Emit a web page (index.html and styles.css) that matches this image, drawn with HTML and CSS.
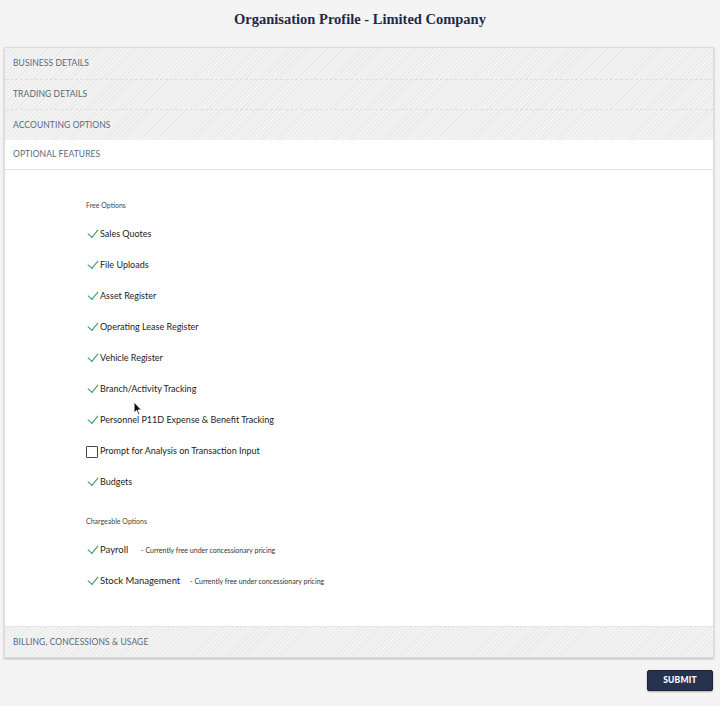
FILE: index.html
```html
<!DOCTYPE html>
<html>
<head>
<meta charset="utf-8">
<link rel="stylesheet" href="styles.css">
</head>
<body>
<h1 class="title">Organisation Profile - Limited Company</h1>
<div class="panel">
  <div class="sec sec-hatch">BUSINESS DETAILS</div>
  <div class="sec sec-hatch dashed">TRADING DETAILS</div>
  <div class="sec sec-hatch dashed">ACCOUNTING OPTIONS</div>
  <div class="sec sec-open">OPTIONAL FEATURES</div>
  <div class="content">
    <div class="group-label">Free Options</div>
    <ul class="opts">
      <li><span class="ico check"></span>Sales Quotes</li>
      <li><span class="ico check"></span>File Uploads</li>
      <li><span class="ico check"></span>Asset Register</li>
      <li><span class="ico check"></span>Operating Lease Register</li>
      <li><span class="ico check"></span>Vehicle Register</li>
      <li><span class="ico check"></span>Branch/Activity Tracking</li>
      <li><span class="ico check"></span>Personnel P11D Expense &amp; Benefit Tracking</li>
      <li><span class="ico box"></span>Prompt for Analysis on Transaction Input</li>
      <li><span class="ico check"></span>Budgets</li>
    </ul>
    <div class="group-label label2">Chargeable Options</div>
    <ul class="opts opts-big">
      <li><span class="ico check"></span><span class="name n1">Payroll</span><span class="note">- Currently free under concessionary pricing</span></li>
      <li><span class="ico check"></span><span class="name n2">Stock Management</span><span class="note">- Currently free under concessionary pricing</span></li>
    </ul>
    <svg class="cursor" width="10" height="15" viewBox="0 0 10 15"><path d="M1 1 L1 12 L3.5 9.5 L5.5 14 L7 13.3 L5 9 L8.5 9 Z" fill="#111" stroke="#fff" stroke-width="1"/></svg>
  </div>
  <div class="sec sec-hatch last">BILLING, CONCESSIONS &amp; USAGE</div>
</div>
<div class="actions"><button class="submit">SUBMIT</button></div>
</body>
</html>
```

FILE: styles.css
```css
* { box-sizing: border-box; }
html, body { margin: 0; padding: 0; }
body {
  background: #f4f4f4;
  font-family: "Lato", "Liberation Sans", sans-serif;
  color: #222;
  width: 720px;
  height: 706px;
  overflow: hidden;
}
.title {
  margin: 0;
  height: 47px;
  padding-top: 11px;
  text-align: center;
  font-family: "Liberation Serif", serif;
  font-weight: bold;
  font-size: 14.5px;
  color: #1e2a4a;
}
.panel {
  margin: 0 6px 0 4px;
  border: 1px solid #dcdcdc;
  background: #fff;
  box-shadow: 0 1px 2px rgba(0,0,0,0.25);
  position: relative;
}
.sec {
  height: 30.5px;
  display: flex;
  align-items: center;
  padding-left: 8px;
  font-size: 8.5px;
  letter-spacing: 0.1px;
  color: #5b687c;
}
.sec-hatch {
  background-color: #f0f0f0;
  background-image: repeating-linear-gradient(-45deg, #e9e9e9 0 1px, #f3f3f3 1px 3px);
}
.dashed { border-top: 1px dashed #dedede; }
.sec-open {
  background: #fff;
  border-bottom: 1px solid #e2e2e2;
}
.last { border-top: 1px solid #e6e6e6; }
.content {
  position: relative;
  padding: 28px 0 30px 81px;
  background: #fff;
}
.group-label {
  height: 14px;
  line-height: 14px;
  font-size: 7px;
  color: #444;
}
.label2 { margin-top: 17px; }
.opts {
  list-style: none;
  margin: 6px 0 0;
  padding: 0;
}
.opts li {
  height: 31px;
  display: flex;
  align-items: center;
  font-size: 9px;
  color: #1d1d1d;
}
.ico {
  width: 14px;
  height: 12px;
  flex: none;
  position: relative;
}
.check::after {
  content: "";
  position: absolute;
  left: 4px;
  top: -1px;
  width: 4.5px;
  height: 9px;
  border-right: 1.5px solid #2a9a6b;
  border-bottom: 1.5px solid #2a9a6b;
  transform: rotate(40deg);
}
.box::after {
  content: "";
  position: absolute;
  left: 0;
  top: 1px;
  width: 10px;
  height: 10px;
  border: 1.5px solid #444;
  border-radius: 1px;
}
.opts-big li { font-size: 9.5px; }
.name { display: inline-block; }
.n1 { width: 41px; }
.n2 { width: 90px; }
.note { font-size: 7px; color: #333; }
.cursor {
  position: absolute;
  left: 128px;
  top: 231px;
}
.actions {
  display: flex;
  justify-content: flex-end;
  padding: 12px 7px 0 0;
}
.submit {
  width: 66px;
  height: 21px;
  background: #27324f;
  color: #fff;
  border: 1px solid #1b243b;
  border-radius: 2px;
  font-family: "Lato", "Liberation Sans", sans-serif;
  font-weight: 900;
  font-size: 8.5px;
  letter-spacing: 0.2px;
  box-shadow: 0 1px 2px rgba(0,0,0,0.3);
  padding: 0;
}
```
